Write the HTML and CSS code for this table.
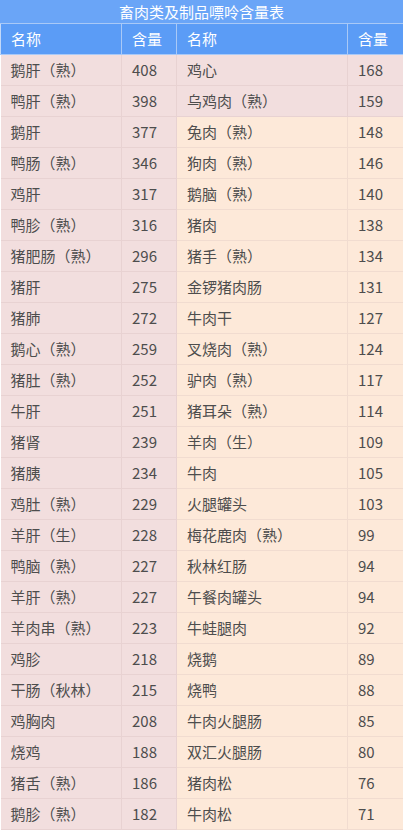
FILE: index.html
```html
<!DOCTYPE html>
<html lang="zh">
<head>
<meta charset="utf-8">
<title>畜肉类及制品嘌呤含量表</title>
<link rel="stylesheet" href="styles.css">
</head>
<body>
<div class="title">畜肉类及制品嘌呤含量表</div>
<table class="purine">
<colgroup><col class="c-name1"><col class="c-val1"><col class="c-name2"><col class="c-val2"></colgroup>
<thead>
<tr><th>名称</th><th>含量</th><th>名称</th><th>含量</th></tr>
</thead>
<tbody>
<tr><td class="hi">鹅肝（熟）</td><td class="hi">408</td><td class="hi">鸡心</td><td class="hi">168</td></tr>
<tr><td class="hi">鸭肝（熟）</td><td class="hi">398</td><td class="hi">乌鸡肉（熟）</td><td class="hi">159</td></tr>
<tr><td class="hi">鹅肝</td><td class="hi">377</td><td class="mid">兔肉（熟）</td><td class="mid">148</td></tr>
<tr><td class="hi">鸭肠（熟）</td><td class="hi">346</td><td class="mid">狗肉（熟）</td><td class="mid">146</td></tr>
<tr><td class="hi">鸡肝</td><td class="hi">317</td><td class="mid">鹅脑（熟）</td><td class="mid">140</td></tr>
<tr><td class="hi">鸭胗（熟）</td><td class="hi">316</td><td class="mid">猪肉</td><td class="mid">138</td></tr>
<tr><td class="hi">猪肥肠（熟）</td><td class="hi">296</td><td class="mid">猪手（熟）</td><td class="mid">134</td></tr>
<tr><td class="hi">猪肝</td><td class="hi">275</td><td class="mid">金锣猪肉肠</td><td class="mid">131</td></tr>
<tr><td class="hi">猪肺</td><td class="hi">272</td><td class="mid">牛肉干</td><td class="mid">127</td></tr>
<tr><td class="hi">鹅心（熟）</td><td class="hi">259</td><td class="mid">叉烧肉（熟）</td><td class="mid">124</td></tr>
<tr><td class="hi">猪肚（熟）</td><td class="hi">252</td><td class="mid">驴肉（熟）</td><td class="mid">117</td></tr>
<tr><td class="hi">牛肝</td><td class="hi">251</td><td class="mid">猪耳朵（熟）</td><td class="mid">114</td></tr>
<tr><td class="hi">猪肾</td><td class="hi">239</td><td class="mid">羊肉（生）</td><td class="mid">109</td></tr>
<tr><td class="hi">猪胰</td><td class="hi">234</td><td class="mid">牛肉</td><td class="mid">105</td></tr>
<tr><td class="hi">鸡肚（熟）</td><td class="hi">229</td><td class="mid">火腿罐头</td><td class="mid">103</td></tr>
<tr><td class="hi">羊肝（生）</td><td class="hi">228</td><td class="mid">梅花鹿肉（熟）</td><td class="mid">99</td></tr>
<tr><td class="hi">鸭脑（熟）</td><td class="hi">227</td><td class="mid">秋林红肠</td><td class="mid">94</td></tr>
<tr><td class="hi">羊肝（熟）</td><td class="hi">227</td><td class="mid">午餐肉罐头</td><td class="mid">94</td></tr>
<tr><td class="hi">羊肉串（熟）</td><td class="hi">223</td><td class="mid">牛蛙腿肉</td><td class="mid">92</td></tr>
<tr><td class="hi">鸡胗</td><td class="hi">218</td><td class="mid">烧鹅</td><td class="mid">89</td></tr>
<tr><td class="hi">干肠（秋林）</td><td class="hi">215</td><td class="mid">烧鸭</td><td class="mid">88</td></tr>
<tr><td class="hi">鸡胸肉</td><td class="hi">208</td><td class="mid">牛肉火腿肠</td><td class="mid">85</td></tr>
<tr><td class="hi">烧鸡</td><td class="hi">188</td><td class="mid">双汇火腿肠</td><td class="mid">80</td></tr>
<tr><td class="hi">猪舌（熟）</td><td class="hi">186</td><td class="mid">猪肉松</td><td class="mid">76</td></tr>
<tr><td class="hi">鹅胗（熟）</td><td class="hi">182</td><td class="mid">牛肉松</td><td class="mid">71</td></tr>
</tbody>
</table>
</body>
</html>
```

FILE: styles.css
```css
html, body {
  margin: 0;
  padding: 0;
  background: #ffffff;
}
body {
  width: 403px;
  font-family: "Noto Sans CJK SC", "Noto Sans", sans-serif;
  color: #4d4d4d;
}
.title {
  height: 23px;
  line-height: 23px;
  background: #6aa5f7;
  color: #ffffff;
  font-size: 15px;
  text-align: center;
}
.purine {
  width: 403px;
  table-layout: fixed;
  border-collapse: collapse;
  font-size: 15px;
}
.c-name1 { width: 121px; }
.c-val1 { width: 55px; }
.c-name2 { width: 171px; }
.c-val2 { width: 56px; }
.purine th {
  height: 30px;
  padding: 0 10px;
  background: #5b9cf6;
  color: #ffffff;
  font-weight: normal;
  text-align: left;
  border: 1px solid #a9c9f7;
  line-height: 30px;
}
.purine th:first-child { border-left-color: #c3d9f9; }
.purine th:last-child { border-right: 0; }
.purine td {
  height: 30px;
  padding: 0 10px;
  line-height: 30px;
  white-space: nowrap;
  border: 1px solid #ead6d3;
}
.purine td:last-child { border-right: 0; }
.purine td:first-child { border-left: 0; }
.purine td.hi { background: #f2dede; border-color: #e8d2d2; }
.purine td.mid { background: #fde9d9; border-color: #f1dcd0; }
```
